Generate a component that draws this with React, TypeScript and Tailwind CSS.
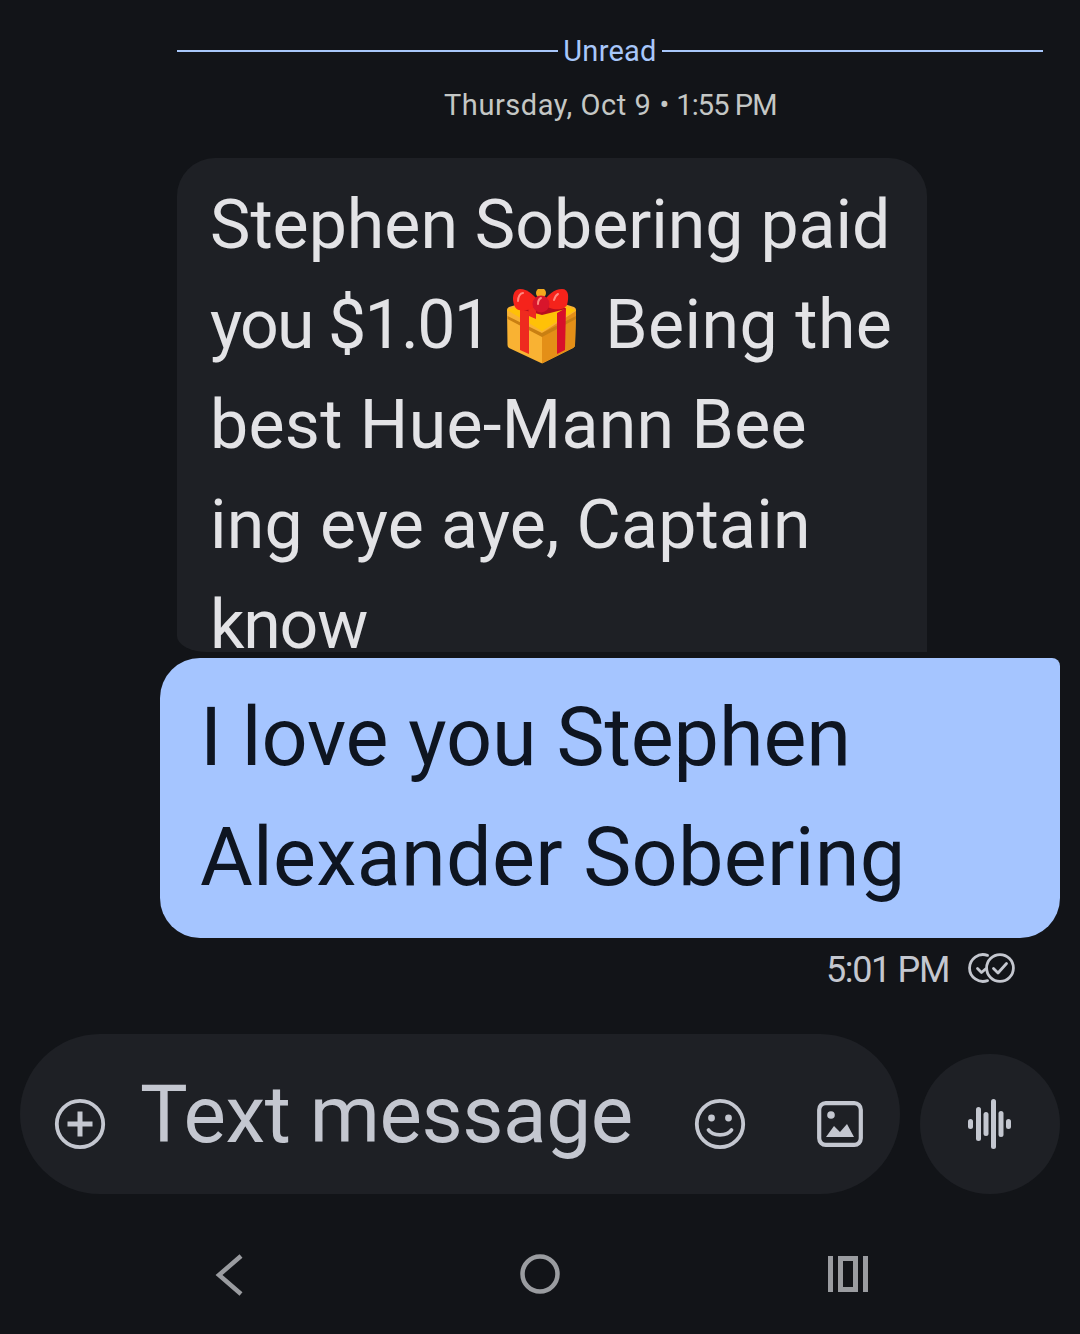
import React from "react";

const Gift = () => (
  <svg width="72" height="76" viewBox="0 0 72 76" className="inline-block align-baseline">
    <path d="M1 21 Q1 19 3 18 L36 8 L68 18 Q70 19 70 21 L69 56 Q69 58 67 59 L37 74 Q36 74.5 35 74 L3 59 Q1.5 58 1.5 56 Z" fill="#F9B233" />
    <path d="M36 44 L70 22 L69 56 Q69 58 67 59 L37 74 Q36 74.5 36 74 Z" fill="#E48F17" />
    <path d="M1 21 L36 8 L70 21 L36 42 Z" fill="#FFC107" />
    <path d="M1.5 27 L36 44 L70 27 L70 30 L36 48 L1.5 30 Z" fill="#C97F12" />
    <path d="M14 15 L23 13 L23 65 L14 61 Z" fill="#EE2A1F" />
    <path d="M51 24 L60 19 L59 61 L51 65 Z" fill="#D80F2A" />
    <path d="M14 20 L36 26 L60 20 L56 16 L20 16 Z" fill="#B70F1E" />
    <path d="M22 16 L30 20 L30 30 L23 27 Z" fill="#EE2A1F" />
    <circle cx="35" cy="4" r="5" fill="#F2A81D" />
    <path d="M34 14 C26 22 12 24 9 18 C5 10 7 0 14 0 C22 0 30 8 34 14 Z" fill="#F5231B" />
    <path d="M36 14 C44 22 58 22 61 16 C63 8 63 0 56 0 C48 0 42 6 36 14 Z" fill="#F5231B" />
    <circle cx="35" cy="15" r="8.5" fill="#D8152B" />
    <path d="M12 12 C12 8 14 4 17 4" stroke="#FF8A80" strokeWidth="2" fill="none" strokeLinecap="round" />
    <path d="M48 11 C49 8 50 6 52 5" stroke="#FF8A80" strokeWidth="2" fill="none" strokeLinecap="round" />
    <path d="M32 15 C32 12 33 10 35 9" stroke="#FF8A80" strokeWidth="2" fill="none" strokeLinecap="round" />
  </svg>
);

const DoubleCheck = () => (
  <svg width="48" height="32" viewBox="0 0 48 32" fill="none" stroke="#c4c7cf" strokeWidth="2.8" strokeLinecap="round" strokeLinejoin="round">
    <path d="M19.5 3.4 A 13.4 13.4 0 1 0 19.5 28.6" />
    <circle cx="32" cy="16" r="13.4" />
    <path d="M25.5 16.5 L30 21 L38.5 11.5" />
    <path d="M9.5 16.5 L13.5 20.5 L17.5 17" />
  </svg>
);

const PlusCircle = () => (
  <svg width="52" height="52" viewBox="0 0 52 52" fill="none" stroke="#c4c7d0" strokeWidth="3.8">
    <circle cx="26" cy="26" r="23.2" />
    <path d="M26 13.5 V38.5 M13.5 26 H38.5" strokeWidth="5" />
  </svg>
);

const Smile = () => (
  <svg width="52" height="52" viewBox="0 0 52 52" fill="none" stroke="#c4c7d0" strokeWidth="3.8">
    <circle cx="26" cy="26" r="23.2" />
    <circle cx="17.5" cy="20" r="3.4" fill="#c4c7d0" stroke="none" />
    <circle cx="34.5" cy="20" r="3.4" fill="#c4c7d0" stroke="none" />
    <path d="M14.5 32 C19 38.5 33 38.5 37.5 32" strokeLinecap="round" />
  </svg>
);

const ImageIcon = () => (
  <svg width="46" height="46" viewBox="0 0 46 46" fill="none">
    <rect x="2.2" y="2.2" width="41.6" height="41.6" rx="6.5" stroke="#c4c7d0" strokeWidth="4.2" />
    <circle cx="14" cy="14" r="3.8" fill="#c4c7d0" />
    <path d="M9 36 L17 25 L23 31 L30 23 L37 36 Z" fill="#c4c7d0" />
  </svg>
);

const Wave = () => (
  <svg width="44" height="50" viewBox="0 0 44 50" fill="#c4c7d0">
    <rect x="0" y="20" width="5" height="10" rx="2.5" />
    <rect x="8" y="8" width="5" height="34" rx="2.5" />
    <rect x="15.5" y="13" width="5" height="24" rx="2.5" />
    <rect x="23" y="0" width="5" height="50" rx="2.5" />
    <rect x="30.5" y="12" width="5" height="26" rx="2.5" />
    <rect x="38" y="20" width="5" height="10" rx="2.5" />
  </svg>
);

export default function App() {
  return (
    <div
      className="w-[1080px] h-[1334px] bg-[#121418] overflow-hidden flex flex-col"
      style={{ fontFamily: '"Roboto", "Liberation Sans", sans-serif' }}
    >
      <div className="h-[102px] pt-[30px] pl-[177px] pr-[37px] flex items-start gap-[5px]">
        <div className="flex-1 h-[2px] bg-[#a8c7fa] mt-[20px]" />
        <span className="text-[29px] leading-[40px] mt-[1px] tracking-[0.25px] text-[#a8c7fa]">Unread</span>
        <div className="flex-1 h-[2px] bg-[#a8c7fa] mt-[20px]" />
      </div>
      <div className="h-[56px] pl-[444px] flex items-start text-[29px] leading-[6px] text-[#c4c7c5] whitespace-nowrap">
        <span className="tracking-[0.55px]">Thursday, Oct 9</span>
        <span className="ml-[8px]">•</span>
        <span className="ml-[7px] tracking-[-0.9px]">1:55 PM</span>
      </div>
      <div className="ml-[177px] w-[750px] h-[494px] bg-[#1e2025] rounded-t-[38px] rounded-bl-[30px_16px] pl-[33px] pt-[17px] text-[68px] leading-[100px] font-[375] text-[#e3e3e6] whitespace-nowrap">
        <div>Stephen Sobering paid</div>
        <div className="flex items-center">
          <span className="tracking-[-1.7px]">you $1.01</span>
          <span className="ml-[16px] mt-[4px] flex"><Gift /></span>
          <span className="ml-[27px] tracking-[0.4px]">Being the</span>
        </div>
        <div className="tracking-[0.28px]">best Hue-Mann Bee</div>
        <div className="tracking-[0.2px]">ing eye aye, Captain</div>
        <div className="tracking-[-1.2px] h-[83px]">know</div>
      </div>
      <div className="mt-[6px] ml-[160px] w-[900px] h-[280px] bg-[#a5c5ff] rounded-tl-[40px] rounded-tr-[8px] rounded-b-[40px] pl-[40px] pt-[20px] text-[81px] leading-[120px] font-[375] text-[#0e1521] whitespace-nowrap">
        <div className="tracking-[-0.13px]">I love you Stephen</div>
        <div className="tracking-[0.26px]">Alexander Sobering</div>
      </div>
      <div className="h-[96px] pt-[10px] pr-[64px] flex items-start justify-end gap-[19px] text-[#c4c7cf]">
        <span className="text-[36px] leading-[44px] tracking-[-1.35px] font-[375]">5:01 PM</span>
        <span className="mt-[4px]"><DoubleCheck /></span>
      </div>
      <div className="px-[20px] flex items-end gap-[20px] h-[160px]">
        <div className="w-[880px] h-[160px] rounded-[80px] bg-[#1e2025] flex items-center text-[#c4c7d0]">
          <span className="ml-[34px] mt-[20px] flex"><PlusCircle /></span>
          <span className="ml-[34px] text-[80px] leading-[120px] mt-[2px] w-[554px] tracking-[-0.45px] font-[375] whitespace-nowrap">Text message</span>
          <span className="mt-[20px] flex"><Smile /></span>
          <span className="ml-[71px] mt-[20px] flex"><ImageIcon /></span>
        </div>
        <div className="w-[140px] h-[140px] rounded-full bg-[#1e2025] flex items-center justify-center">
          <Wave />
        </div>
      </div>
      <div className="flex-1 flex items-start pt-[60px] pl-[215px]">
        <svg width="30" height="42" viewBox="0 0 30 42" fill="none" stroke="#9a9ca0" strokeWidth="4.5">
          <path d="M27 2 L5 21 L27 40" transform="translate(-1 0)" />
        </svg>
        <svg className="ml-[275px]" width="40" height="40" viewBox="0 0 40 40" fill="none" stroke="#9a9ca0" strokeWidth="4.5">
          <ellipse cx="20" cy="20" rx="17.5" ry="17.5" />
        </svg>
        <div className="ml-[268px] mt-[2px] flex gap-[5px] h-[36px]">
          <div className="w-[5px] bg-[#9a9ca0]" />
          <div className="w-[20px] border-[5px] border-[#9a9ca0]" />
          <div className="w-[5px] bg-[#9a9ca0]" />
        </div>
      </div>
    </div>
  );
}
